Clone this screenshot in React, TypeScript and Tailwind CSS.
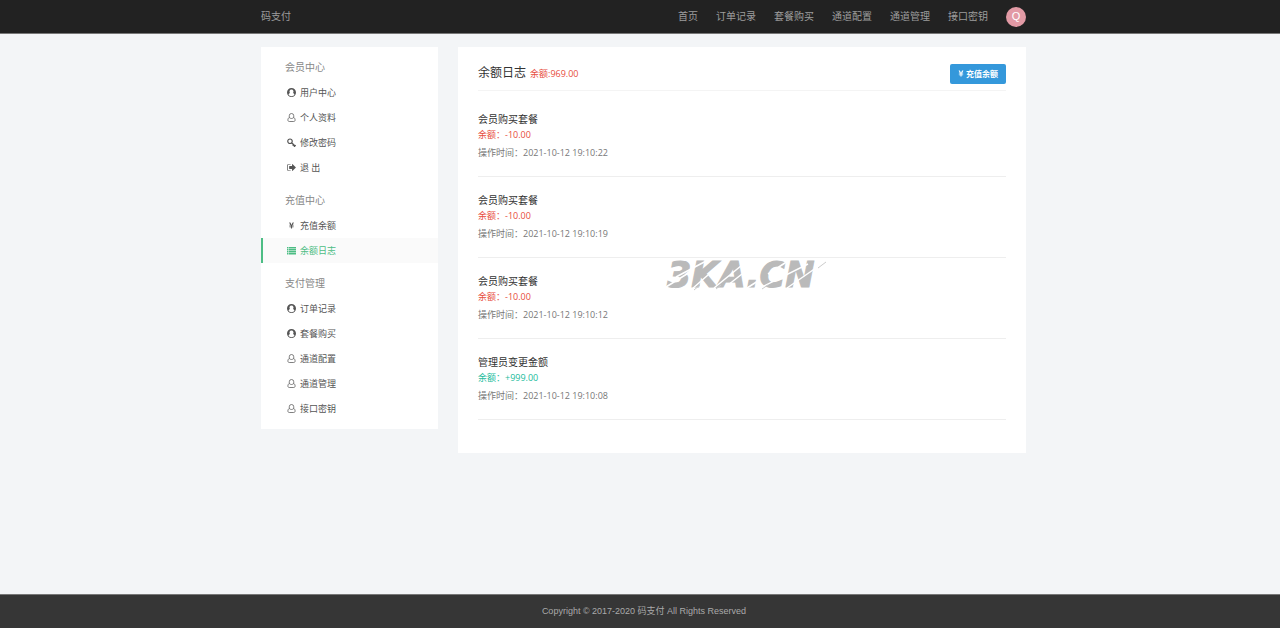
import React from 'react';
import { FaYenSign } from 'react-icons/fa';

type IconProps = { className?: string };

const UserCircleIcon: React.FC<IconProps> = ({ className }) => (
  <svg viewBox="0 0 18 18" className={className} aria-hidden="true">
    <path
      fill="currentColor"
      fillRule="evenodd"
      d="M9 0a9 9 0 1 1 0 18A9 9 0 0 1 9 0Zm0 3a4 4 0 0 0-2.900 6.800C4.300 10.200 3.300 11.800 3.200 13.600 4.600 15.500 6.700 16.500 9 16.500s4.400-1 5.800-2.900c-.1-1.800-1.100-3.400-2.900-3.800A4 4 0 0 0 9 3Z"
    />
  </svg>
);

const UserOutlineIcon: React.FC<IconProps> = ({ className }) => (
  <svg viewBox="0 0 18 18" className={className} aria-hidden="true" fill="none" stroke="currentColor" strokeWidth="1.500">
    <path d="M4.500 9.500V5.500a4.500 4.500 0 0 1 9 0v4" />
    <path d="M5 9.300c1 1 2.400 1.700 4 1.700s3-.7 4-1.700c2.200.4 3.200 2.300 3.200 4.700 0 1.900-1 3-2.700 3h-9c-1.700 0-2.700-1.100-2.700-3 0-2.400 1-4.300 3.200-4.700Z" />
  </svg>
);

const KeyIcon: React.FC<IconProps> = ({ className }) => (
  <svg viewBox="0 0 18 18" className={className} aria-hidden="true" fill="none" stroke="currentColor">
    <circle cx="6" cy="6.500" r="4.500" strokeWidth="2.400" />
    <path d="m9 9.500 7 6.500M11.500 15.500l3-3" strokeWidth="2.600" />
    <path d="m14 18 3.500-3.500" strokeWidth="2.200" />
  </svg>
);

const SignOutIcon: React.FC<IconProps> = ({ className }) => (
  <svg viewBox="0 128 1600 1536" className={className} aria-hidden="true" fill="currentColor">
    <path d="M640 1440q0 4 1 20t.5 26.5-3 23.5-10 19.5-20.5 6.500h-320q-119 0-203.5-84.5t-84.5-203.500v-704q0-119 84.5-203.5t203.5-84.500h320q13 0 22.5 9.500t9.500 22.500q0 4 1 20t.5 26.500-3 23.500-10 19.500-20.500 6.500h-320q-66 0-113 47t-47 113v704q0 66 47 113t113 47h312l11.500 1 11.500 3 8 5.500 7 9 2 13.500zm928-544q0 26-19 45l-544 544q-19 19-45 19t-45-19-19-45v-288h-448q-26 0-45-19t-19-45v-384q0-26 19-45t45-19h448v-288q0-26 19-45t45-19 45 19l544 544q19 19 19 45z" />
  </svg>
);

const ListIcon: React.FC<IconProps> = ({ className }) => (
  <svg viewBox="0 0 18 18" className={className} aria-hidden="true" fill="currentColor">
    <path d="M0 2h3v3H0zM4 2h14v3H4zM0 6h3v3H0zM4 6h14v3H4zM0 10h3v3H0zM4 10h14v3H4zM0 14h3v3H0zM4 14h14v3H4z" />
  </svg>
);

const navLinks = ['首页', '订单记录', '套餐购买', '通道配置', '通道管理', '接口密钥'];

const menuGroups = [
  {
    title: '会员中心',
    items: [
      { label: '用户中心', icon: UserCircleIcon },
      { label: '个人资料', icon: UserOutlineIcon },
      { label: '修改密码', icon: KeyIcon },
      { label: '退 出', icon: SignOutIcon },
    ],
  },
  {
    title: '充值中心',
    items: [
      { label: '充值余额', icon: FaYenSign },
      { label: '余额日志', icon: ListIcon, active: true },
    ],
  },
  {
    title: '支付管理',
    items: [
      { label: '订单记录', icon: UserCircleIcon },
      { label: '套餐购买', icon: UserCircleIcon },
      { label: '通道配置', icon: UserOutlineIcon },
      { label: '通道管理', icon: UserOutlineIcon },
      { label: '接口密钥', icon: UserOutlineIcon },
    ],
  },
];

const logs = [
  { title: '会员购买套餐', amount: '-10.00', time: '2021-10-12 19:10:22' },
  { title: '会员购买套餐', amount: '-10.00', time: '2021-10-12 19:10:19' },
  { title: '会员购买套餐', amount: '-10.00', time: '2021-10-12 19:10:12' },
  { title: '管理员变更金额', amount: '+999.00', time: '2021-10-12 19:10:08' },
];

const Watermark: React.FC = () => (
  <svg viewBox="0 0 170 48" className="pointer-events-none absolute left-[206px] top-[205px] w-[170px]">
    <text
      x="3"
      y="35"
      fill="#bababa"
      stroke="#bababa"
      fontFamily="DejaVu Sans"
      fontSize="35"
      fontWeight="bold"
      fontStyle="italic"
    >
      3KA.CN
    </text>
    <g stroke="#fff" strokeWidth="1.500">
      <path d="M2 35 26 20M12 25 44 8M28 37 60 9M50 36 83 9M64 33 78 22M83 36 94 29M96 36 144 12M104 22 124 9M123 36 162 9" />
    </g>
    <path d="M30 38 36 33M52 37 57 33M98 37 104 33M154 16 162 10" stroke="#ccc" />
  </svg>
);

const App: React.FC = () => {
  return (
    <div className="flex min-h-screen flex-col bg-[#f3f5f7] font-['Open_Sans','Noto_Sans_CJK_SC',sans-serif] text-[9px] text-[#555]">
      <header className="border-b border-[#777] bg-[#222] pl-[7px]">
        <div className="mx-auto flex h-[33px] max-w-[765px] items-center justify-between text-[10px] text-[#9d9d9d]">
          <a href="#home">码支付</a>
          <nav className="flex items-center gap-[18px]">
            {navLinks.map((label) => (
              <a key={label} href={`#${label}`}>{label}</a>
            ))}
            <a
              href="#account"
              className="flex h-5 w-5 items-center justify-center rounded-full bg-[#e29aa5] font-['Liberation_Sans',sans-serif] text-[11px] text-white"
            >
              Q
            </a>
          </nav>
        </div>
      </header>

      <div className="pl-[7px]">
        <div className="mx-auto flex max-w-[765px] items-start gap-5 pt-[13px]">
          {/* Sidebar */}
          <aside className="w-[177px] shrink-0 bg-white pb-2">
            {menuGroups.map((group) => (
              <section key={group.title} className="pt-2">
                <h2 className="pl-6 text-[10px] leading-[25px] text-[#888]">{group.title}</h2>
                <ul>
                  {group.items.map(({ label, icon: Icon, active }) => (
                    <li key={label}>
                      <a
                        href={`#${label}`}
                        className={
                          active
                            ? 'flex h-[25px] items-center gap-1 border-l-2 border-[#4dbd84] bg-[#fafafa] pl-6 text-[#4dbd84]'
                            : 'flex h-[25px] items-center gap-1 border-l-2 border-transparent pl-6 text-[#555]'
                        }
                      >
                        <Icon className={label === '充值余额' ? 'h-[7px] w-[9px]' : 'h-[9px] w-[9px]'} />
                        {label}
                      </a>
                    </li>
                  ))}
                </ul>
              </section>
            ))}
          </aside>

          {/* Balance log */}
          <main className="relative min-w-0 flex-1 bg-white px-5 pb-[33px] pt-4">
            <div className="mb-[5px] flex items-center justify-between border-b border-[#f4f4f4] pb-[6px]">
              <h1 className="flex items-baseline gap-1 text-[12px] leading-5 text-[#333]">
                余额日志 <small className="text-[9px] text-[#e74c3c]">余额:969.00</small>
              </h1>
              <button
                type="button"
                className="flex h-5 w-14 items-center justify-center gap-[2px] rounded-[2px] bg-[#3498db] text-[8px] font-bold text-white"
              >
                <FaYenSign className="h-[7px] w-[6px]" />
                充值余额
              </button>
            </div>

            {logs.map((log) => (
              <article key={log.time} className="border-b border-[#eee] pb-[13px] pt-[15px]">
                <h3 className="text-[10px] leading-4 text-[#333]">{log.title}</h3>
                <p className={log.amount.startsWith('-') ? 'leading-4 text-[#e74c3c]' : 'leading-4 text-[#1abc9c]'}>
                  余额：{log.amount}
                </p>
                <p className="leading-5 text-[#777]">操作时间：{log.time}</p>
              </article>
            ))}

            <Watermark />
          </main>
        </div>
      </div>

      <footer className="mt-auto border-t border-[#777] bg-[#363636] pl-2 text-center font-['Liberation_Sans','Noto_Sans_CJK_SC',sans-serif] leading-[33px] text-[#aaa]">
        Copyright © 2017-2020 码支付 All Rights Reserved
      </footer>
    </div>
  );
};

export default App;
